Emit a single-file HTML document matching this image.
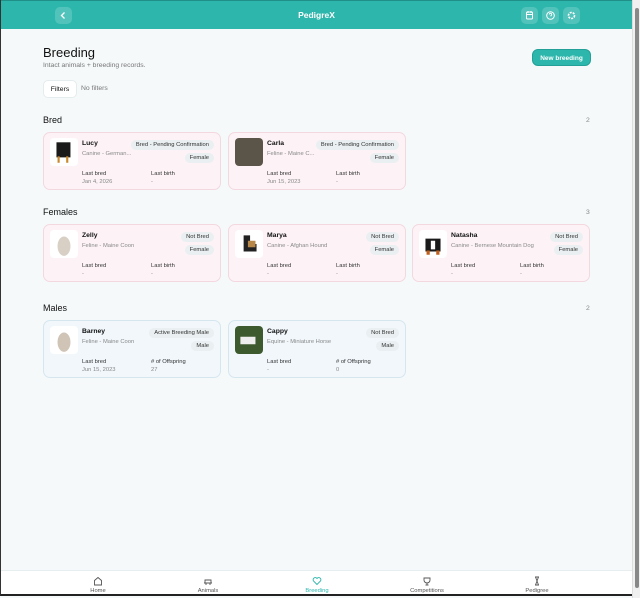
<!DOCTYPE html>
<html><head><meta charset="utf-8"><style>
*{box-sizing:border-box;margin:0;padding:0}
body{width:640px;height:598px;overflow:hidden;font-family:"Liberation Sans",sans-serif;background:#f5f9fa;position:relative;color:#111}
.frame{position:absolute;left:0;top:0;width:632px;height:596px;border-left:1px solid #333;border-bottom:2px solid #222}
.sb{position:absolute;right:0;top:0;width:8px;height:598px;background:#f0f0f0;border-left:1px solid #ddd}
.sb div{position:absolute;left:2px;top:8px;width:4px;height:580px;background:#888;border-radius:2px}
.hdr{position:absolute;left:1px;top:0;width:631px;height:29px;background:#2db6ac;border-top:1px solid #1f8f87}
.hbtn{position:absolute;top:6px;width:17px;height:17px;border-radius:5px;background:rgba(255,255,255,.18)}
.title{position:absolute;left:0;width:631px;top:9px;text-align:center;color:#fff;font-weight:bold;font-size:8.5px}
h1{position:absolute;left:43px;top:45px;font-size:13px;font-weight:normal}
.sub{position:absolute;left:43px;top:62px;font-size:6.8px;color:#777}
.newb{position:absolute;left:532px;top:49px;width:59px;height:17px;border-radius:6px;background:#2db6ac;color:#fff;font-size:6.5px;font-weight:bold;text-align:center;line-height:17px;border:1px solid #23a097}
.filt{position:absolute;left:43px;top:80px;width:34px;height:18px;border:1px solid #e5ecee;border-radius:5px;background:#fff;font-size:6.8px;text-align:center;line-height:17px}
.nof{position:absolute;left:81px;top:85px;font-size:6.8px;color:#777}
.sec{position:absolute;left:43px;font-size:9px}
.cnt{position:absolute;left:586px;font-size:6.8px;color:#888}
.card{position:absolute;width:178px;height:58px;border-radius:7px;background:#fdf3f6;border:1px solid #f3d8e0}
.card.m{background:#f1f7fb;border-color:#d6e6ef}
.img{position:absolute;left:6px;top:5px;width:28px;height:28px;border-radius:4px;background:#fff;overflow:hidden}
.img svg{width:28px;height:28px}
.nm{position:absolute;left:38px;top:7px;font-size:6.8px;font-weight:bold}
.sp{position:absolute;left:38px;top:18px;font-size:5.8px;color:#888;white-space:nowrap}
.pill{position:absolute;right:6px;height:10px;border-radius:5px;background:#eaeff1;font-size:5.8px;line-height:10px;padding:0 5px;color:#333;white-space:nowrap}
.lb{position:absolute;top:38px;font-size:5.8px;color:#333}
.vl{position:absolute;top:46px;font-size:5.8px;color:#888}
.nav{position:absolute;left:1px;top:570px;width:631px;height:26px;background:#fff;border-top:1px solid #e8eef0}
.ni{position:absolute;top:0;width:80px;text-align:center;font-size:5.8px;color:#555}
.ni svg{display:block;margin:5px auto 2px}
</style></head><body>
<div class="hdr">
<div class="hbtn" style="left:54px"><svg width="17" height="17"><path d="M9.5 5.5 6.5 8.5 9.5 11.5" stroke="#fff" fill="none" stroke-width="1.3"/></svg></div>
<div class="title">PedigreX</div>
<div class="hbtn" style="left:520px"><svg width="17" height="17"><rect x="5.5" y="5" width="6" height="7" rx="1" stroke="#fff" fill="none"/><path d="M5.5 7.5h6M7 4v2M10 4v2" stroke="#fff"/></svg></div>
<div class="hbtn" style="left:541px"><svg width="17" height="17"><circle cx="8.5" cy="8.5" r="3.8" stroke="#fff" fill="none"/><path d="M7.3 7.5a1.2 1.2 0 1 1 1.6 1.1v.8" stroke="#fff" fill="none" stroke-width=".9"/></svg></div>
<div class="hbtn" style="left:562px"><svg width="17" height="17"><circle cx="8.5" cy="8.5" r="3" stroke="#fff" fill="none" stroke-width="1.6" stroke-dasharray="2 1"/></svg></div>
</div>
<h1>Breeding</h1>
<div class="sub">Intact animals + breeding records.</div>
<div class="newb">New breeding</div>
<div class="filt">Filters</div><div class="nof">No filters</div>

<div class="sec" style="top:115px">Bred</div><div class="cnt" style="top:117px">2</div>
<div class="card" style="left:43px;top:132px"><div class="img"><svg viewBox="0 0 26 26"><rect x="6" y="4" width="13" height="14" fill="#1a1a1a"/><rect x="7" y="17" width="2" height="6" fill="#c98a2d"/><rect x="15" y="17" width="2" height="6" fill="#c98a2d"/></svg></div><div class="nm">Lucy</div><div class="sp">Canine - German...</div><div class="pill" style="top:7px">Bred - Pending Confirmation</div><div class="pill" style="top:20px">Female</div><div class="lb" style="left:38px">Last bred</div><div class="vl" style="left:38px">Jan 4, 2026</div><div class="lb" style="left:107px">Last birth</div><div class="vl" style="left:107px">-</div></div>
<div class="card" style="left:228px;top:132px"><div class="img" style="background:#5a5548"></div><div class="nm">Carla</div><div class="sp">Feline - Maine C...</div><div class="pill" style="top:7px">Bred - Pending Confirmation</div><div class="pill" style="top:20px">Female</div><div class="lb" style="left:38px">Last bred</div><div class="vl" style="left:38px">Jun 15, 2023</div><div class="lb" style="left:107px">Last birth</div><div class="vl" style="left:107px">-</div></div>

<div class="sec" style="top:207px">Females</div><div class="cnt" style="top:209px">3</div>
<div class="card" style="left:43px;top:224px"><div class="img"><svg viewBox="0 0 26 26"><ellipse cx="13" cy="15" rx="6" ry="9" fill="#d8d0c4"/></svg></div><div class="nm">Zelly</div><div class="sp">Feline - Maine Coon</div><div class="pill" style="top:7px">Not Bred</div><div class="pill" style="top:20px">Female</div><div class="lb" style="left:38px">Last bred</div><div class="vl" style="left:38px">-</div><div class="lb" style="left:107px">Last birth</div><div class="vl" style="left:107px">-</div></div>
<div class="card" style="left:228px;top:224px"><div class="img"><svg viewBox="0 0 26 26"><path d="M8 5h6v8h6v7H8z" fill="#222"/><path d="M12 10h7v6h-7z" fill="#b8884a"/></svg></div><div class="nm">Marya</div><div class="sp">Canine - Afghan Hound</div><div class="pill" style="top:7px">Not Bred</div><div class="pill" style="top:20px">Female</div><div class="lb" style="left:38px">Last bred</div><div class="vl" style="left:38px">-</div><div class="lb" style="left:107px">Last birth</div><div class="vl" style="left:107px">-</div></div>
<div class="card" style="left:412px;top:224px"><div class="img"><svg viewBox="0 0 26 26"><path d="M6 8h14v12H6z" fill="#1a1a1a"/><path d="M11 10h4v8h-4z" fill="#fff"/><path d="M7 19h3v4H7zM16 19h3v4h-3z" fill="#c0601f"/></svg></div><div class="nm">Natasha</div><div class="sp">Canine - Bernese Mountain Dog</div><div class="pill" style="top:7px">Not Bred</div><div class="pill" style="top:20px">Female</div><div class="lb" style="left:38px">Last bred</div><div class="vl" style="left:38px">-</div><div class="lb" style="left:107px">Last birth</div><div class="vl" style="left:107px">-</div></div>

<div class="sec" style="top:303px">Males</div><div class="cnt" style="top:305px">2</div>
<div class="card m" style="left:43px;top:320px"><div class="img"><svg viewBox="0 0 26 26"><ellipse cx="13" cy="15" rx="6" ry="9" fill="#cfc4b5"/></svg></div><div class="nm">Barney</div><div class="sp">Feline - Maine Coon</div><div class="pill" style="top:7px">Active Breeding Male</div><div class="pill" style="top:20px">Male</div><div class="lb" style="left:38px">Last bred</div><div class="vl" style="left:38px">Jun 15, 2023</div><div class="lb" style="left:107px"># of Offspring</div><div class="vl" style="left:107px">27</div></div>
<div class="card m" style="left:228px;top:320px"><div class="img" style="background:#3d5a2e"><svg viewBox="0 0 26 26"><path d="M5 10h14v7H5z" fill="#eee"/></svg></div><div class="nm">Cappy</div><div class="sp">Equine - Miniature Horse</div><div class="pill" style="top:7px">Not Bred</div><div class="pill" style="top:20px">Male</div><div class="lb" style="left:38px">Last bred</div><div class="vl" style="left:38px">-</div><div class="lb" style="left:107px"># of Offspring</div><div class="vl" style="left:107px">0</div></div>

<div class="nav">
<div class="ni" style="left:57px"><svg width="10" height="10"><path d="M1.5 9V4.5L5 1.5 8.5 4.5V9z" stroke="#555" fill="none" stroke-width=".9"/></svg>Home</div>
<div class="ni" style="left:167px"><svg width="10" height="10"><path d="M2 7V4h6v3M1 7h8M3 7v2M7 7v2" stroke="#555" fill="none" stroke-width=".9"/></svg>Animals</div>
<div class="ni" style="left:276px;color:#2db6ac"><svg width="10" height="10"><path d="M5 8.5 1.5 5A2 2 0 0 1 5 2.5 2 2 0 0 1 8.5 5z" stroke="#2db6ac" fill="none" stroke-width=".9"/></svg>Breeding</div>
<div class="ni" style="left:386px"><svg width="10" height="10"><path d="M2 2h6v2a3 3 0 0 1-6 0zM5 7v2M3.5 9h3" stroke="#555" fill="none" stroke-width=".9"/></svg>Competitions</div>
<div class="ni" style="left:496px"><svg width="10" height="10"><path d="M3 1h4M3 9h4M3.5 1 6.5 9M6.5 1 3.5 9" stroke="#555" fill="none" stroke-width=".9"/></svg>Pedigree</div>
</div>
<div class="frame"></div>
<div class="sb"><div></div></div>
</body></html>
